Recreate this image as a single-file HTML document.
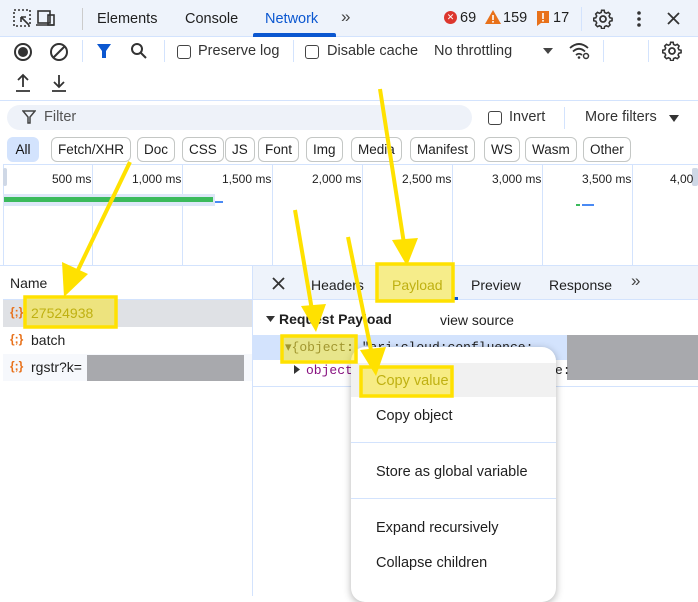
<!DOCTYPE html>
<html><head><meta charset="utf-8"><style>
*{margin:0;padding:0;box-sizing:border-box}
body{width:698px;height:596px;overflow:hidden;background:#fff;font-family:"Liberation Sans","DejaVu Sans",sans-serif;font-size:14px;color:#1f1f1f;position:relative}
.a{position:absolute;white-space:nowrap}
.chip{position:absolute;top:137px;height:25px;border:1px solid #c4c7c5;border-radius:6px;font-size:13.5px;line-height:23px;padding:0 6px;background:#fff}
.cb{position:absolute;width:14px;height:14px;border:1.5px solid #444;border-radius:3px}
.vl{position:absolute;width:1px;background:#d3e3fd}
.mono{font-family:"Liberation Mono",monospace;font-size:13px}
</style></head><body>
<svg width="0" height="0" style="position:absolute"><defs>
<g id="gear" fill="none" stroke="#333" stroke-width="1.8"><circle cx="10" cy="10" r="3"/><path d="M8.5 1.5h3l.5 2.5 2 1 2.3-1.2 2.1 2.1-1.2 2.3 1 2 2.5.5v3l-2.5.5-1 2 1.2 2.3-2.1 2.1-2.3-1.2-2 1-.5 2.5h-3l-.5-2.5-2-1-2.3 1.2-2.1-2.1 1.2-2.3-1-2-2.5-.5v-3l2.5-.5 1-2-1.2-2.3 2.1-2.1 2.3 1.2 2-1z" transform="scale(.86) translate(1.5 0)"/></g>
</defs></svg>
<!-- top bar -->
<div class="a" style="left:0;top:0;width:698px;height:37px;background:#eef3fb;border-bottom:1px solid #d3e3fd"></div>
<svg class="a" style="left:12px;top:8px" width="52" height="22" viewBox="0 0 52 22" fill="none" stroke="#333" stroke-width="1.6">
<rect x="2" y="2" width="16" height="16" stroke-dasharray="2 2"/><path d="M9 9 L17 17 M9 9 h5 M9 9 v5"/>
<rect x="26" y="3" width="12" height="12"/><path d="M24 17 h18"/><rect x="36" y="7" width="6" height="10"/></svg>
<div class="a" style="left:82px;top:8px;width:1px;height:22px;background:#ccc"></div>
<div class="a" style="left:97px;top:11px;font-size:14.5px">Elements</div>
<div class="a" style="left:185px;top:11px;font-size:14.5px">Console</div>
<div class="a" style="left:265px;top:11px;font-size:14.5px;color:#0b57d0">Network</div>
<div class="a" style="left:253px;top:33px;width:83px;height:4px;background:#0b57d0;border-radius:2px 2px 0 0"></div>
<div class="a" style="left:341px;top:7px;font-size:17px;color:#444">&raquo;</div>
<div class="a" style="left:444px;top:11px;width:13px;height:13px;border-radius:50%;background:#dc362e;color:#fff;font-size:9px;text-align:center;line-height:13px">✕</div>
<div class="a" style="left:460px;top:10px;font-size:14.5px">69</div>
<svg class="a" style="left:485px;top:10px" width="16" height="14"><path d="M8 0 L16 14 H0 Z" fill="#e8711a"/><rect x="7.2" y="5" width="1.6" height="5" fill="#fff"/><rect x="7.2" y="11" width="1.6" height="1.6" fill="#fff"/></svg>
<div class="a" style="left:503px;top:10px;font-size:14.5px">159</div>
<svg class="a" style="left:537px;top:11px" width="12" height="15"><path d="M0 0 H12 V12 H4 L0 15 Z" fill="#e8711a"/><rect x="5.2" y="2" width="1.6" height="6" fill="#fff"/><rect x="5.2" y="9" width="1.6" height="1.6" fill="#fff"/></svg>
<div class="a" style="left:553px;top:10px;font-size:14.5px">17</div>
<div class="a" style="left:581px;top:7px;width:1px;height:24px;background:#d3e3fd"></div>
<svg class="a" style="left:593px;top:9px" width="20" height="20"><use href="#gear"/></svg>
<svg class="a" style="left:636px;top:10px" width="6" height="18"><circle cx="3" cy="3" r="1.8" fill="#333"/><circle cx="3" cy="9" r="1.8" fill="#333"/><circle cx="3" cy="15" r="1.8" fill="#333"/></svg>
<svg class="a" style="left:667px;top:12px" width="13" height="13" stroke="#333" stroke-width="1.8"><path d="M1 1 L12 12 M12 1 L1 12"/></svg>
<!-- toolbar -->
<div class="a" style="left:14px;top:43px;width:18px;height:18px;border:2px solid #333;border-radius:50%"></div>
<div class="a" style="left:18px;top:47px;width:10px;height:10px;background:#333;border-radius:50%"></div>
<svg class="a" style="left:49px;top:42px" width="20" height="20"><circle cx="10" cy="10" r="8" fill="none" stroke="#333" stroke-width="2"/><path d="M4 16 L16 4" stroke="#333" stroke-width="2"/></svg>
<div class="a" style="left:82px;top:40px;width:1px;height:22px;background:#d3e3fd"></div>
<svg class="a" style="left:96px;top:43px" width="16" height="16"><path d="M1 1 H15 L10 8 V15 H6 V8 Z" fill="#0b57d0"/></svg>
<svg class="a" style="left:130px;top:42px" width="18" height="18" fill="none" stroke="#333" stroke-width="2"><circle cx="7" cy="7" r="5"/><path d="M11 11 L16 16"/></svg>
<div class="a" style="left:164px;top:40px;width:1px;height:22px;background:#d3e3fd"></div>
<div class="cb" style="left:177px;top:45px"></div><div class="a" style="left:198px;top:43px;font-size:14.5px;color:#333">Preserve log</div>
<div class="a" style="left:293px;top:40px;width:1px;height:22px;background:#d3e3fd"></div>
<div class="cb" style="left:305px;top:45px"></div><div class="a" style="left:327px;top:43px;font-size:14.5px;color:#333">Disable cache</div>
<div class="a" style="left:434px;top:43px;font-size:14.5px;color:#333">No throttling</div>
<svg class="a" style="left:543px;top:48px" width="10" height="6"><path d="M0 0 H10 L5 6 Z" fill="#444"/></svg>
<svg class="a" style="left:569px;top:42px" width="22" height="18" fill="none" stroke="#333" stroke-width="1.8"><path d="M1 6 Q10 -2 19 6 M4 9.5 Q10 4 16 9.5 M7 13 Q10 10.5 13 13"/><circle cx="10" cy="15.5" r="1.3" fill="#333" stroke="none"/><circle cx="17" cy="14" r="2.5" stroke-width="1.5"/></svg>
<div class="a" style="left:603px;top:40px;width:1px;height:22px;background:#d3e3fd"></div>
<div class="a" style="left:648px;top:40px;width:1px;height:22px;background:#d3e3fd"></div>
<svg class="a" style="left:662px;top:41px" width="20" height="20"><use href="#gear"/></svg>
<svg class="a" style="left:14px;top:73px" width="60" height="20" fill="none" stroke="#333" stroke-width="1.8"><path d="M9 14 V2 M4 7 L9 2 L14 7 M2 18 H16"/><path d="M45 2 V14 M40 9 L45 14 L50 9 M38 18 H52"/></svg>
<div class="a" style="left:0;top:100px;width:698px;height:1px;background:#d3e3fd"></div>
<!-- filter -->
<div class="a" style="left:7px;top:105px;width:465px;height:25px;background:#eef2f9;border-radius:13px"></div>
<svg class="a" style="left:22px;top:110px" width="14" height="14" fill="none" stroke="#444" stroke-width="1.5"><path d="M1 1 H13 L8 7 V13 H6 V7 Z"/></svg>
<div class="a" style="left:44px;top:109px;font-size:14.5px;color:#555">Filter</div>
<div class="cb" style="left:488px;top:111px"></div><div class="a" style="left:509px;top:109px;font-size:14.5px;color:#333">Invert</div>
<div class="a" style="left:564px;top:107px;width:1px;height:22px;background:#d3e3fd"></div>
<div class="a" style="left:585px;top:109px;font-size:14.5px;color:#333">More filters</div>
<svg class="a" style="left:669px;top:115px" width="10" height="7"><path d="M0 0 H10 L5 7 Z" fill="#333"/></svg>
<div class="a" style="left:7px;top:137px;width:32px;height:25px;background:#d3e3fd;border-radius:6px;font-size:13.5px;line-height:25px;text-align:center;color:#111">All</div>
<div class="chip" style="left:51px">Fetch/XHR</div>
<div class="chip" style="left:137px">Doc</div>
<div class="chip" style="left:182px">CSS</div>
<div class="chip" style="left:225px">JS</div>
<div class="chip" style="left:258px">Font</div>
<div class="chip" style="left:306px">Img</div>
<div class="chip" style="left:351px">Media</div>
<div class="chip" style="left:410px">Manifest</div>
<div class="chip" style="left:484px">WS</div>
<div class="chip" style="left:525px">Wasm</div>
<div class="chip" style="left:583px">Other</div>
<!-- timeline -->
<div class="a" style="left:3px;top:164px;width:695px;height:1px;background:#d3e3fd"></div>
<div class="vl" style="left:92px;top:165px;height:100px"></div>
<div class="vl" style="left:182px;top:165px;height:100px"></div>
<div class="vl" style="left:272px;top:165px;height:100px"></div>
<div class="vl" style="left:362px;top:165px;height:100px"></div>
<div class="vl" style="left:452px;top:165px;height:100px"></div>
<div class="vl" style="left:542px;top:165px;height:100px"></div>
<div class="vl" style="left:632px;top:165px;height:100px"></div>
<div class="a" style="left:3px;top:164px;width:1px;height:101px;background:#d3e3fd"></div>
<div class="a" style="left:3px;top:168px;width:4px;height:18px;background:#cfd8e6;border-radius:2px"></div>
<div class="a" style="left:692px;top:168px;width:6px;height:18px;background:#cfd8e6;border-radius:2px"></div>
<div class="a" style="left:52px;top:172px;font-size:12px">500 ms</div>
<div class="a" style="left:132px;top:172px;font-size:12px">1,000 ms</div>
<div class="a" style="left:222px;top:172px;font-size:12px">1,500 ms</div>
<div class="a" style="left:312px;top:172px;font-size:12px">2,000 ms</div>
<div class="a" style="left:402px;top:172px;font-size:12px">2,500 ms</div>
<div class="a" style="left:492px;top:172px;font-size:12px">3,000 ms</div>
<div class="a" style="left:582px;top:172px;font-size:12px">3,500 ms</div>
<div class="a" style="left:670px;top:172px;font-size:12px">4,00</div>
<div class="a" style="left:3px;top:194px;width:212px;height:12px;background:#dde7f8"></div>
<div class="a" style="left:4px;top:197px;width:209px;height:5px;background:#3bba5c"></div>
<div class="a" style="left:215px;top:201px;width:8px;height:2px;background:#4a8af4"></div>
<div class="a" style="left:576px;top:204px;width:4px;height:2px;background:#3bba5c"></div>
<div class="a" style="left:582px;top:204px;width:12px;height:2px;background:#4a8af4"></div>
<div class="a" style="left:0;top:265px;width:698px;height:1px;background:#d3e3fd"></div>
<!-- left panel -->
<div class="a" style="left:10px;top:275px;font-size:14px">Name</div>
<div class="a" style="left:3px;top:299px;width:249px;height:1px;background:#d3e3fd"></div>
<div class="a" style="left:3px;top:300px;width:249px;height:27px;background:#dfe1e5"></div>
<div class="a" style="left:3px;top:354px;width:249px;height:27px;background:#f6f8fc"></div>
<div class="a" style="left:10px;top:305px;color:#e8711a;font-size:12px;font-weight:bold">{;}</div>
<div class="a" style="left:31px;top:305px;font-size:14px;color:#8a8420">27524938</div>
<div class="a" style="left:10px;top:332px;color:#e8711a;font-size:12px;font-weight:bold">{;}</div>
<div class="a" style="left:31px;top:332px;font-size:14px">batch</div>
<div class="a" style="left:10px;top:359px;color:#e8711a;font-size:12px;font-weight:bold">{;}</div>
<div class="a" style="left:31px;top:359px;font-size:14px">rgstr?k=</div>
<div class="a" style="left:87px;top:355px;width:157px;height:26px;background:#a8a9ad"></div>
<div class="a" style="left:252px;top:265px;width:1px;height:331px;background:#d3e3fd"></div>
<!-- right panel -->
<div class="a" style="left:253px;top:266px;width:445px;height:34px;background:#eef3fb;border-bottom:1px solid #d3e3fd"></div>
<svg class="a" style="left:272px;top:277px" width="13" height="13" stroke="#333" stroke-width="1.8"><path d="M1 1 L12 12 M12 1 L1 12"/></svg>
<div class="a" style="left:311px;top:277px;font-size:14px">Headers</div>
<div class="a" style="left:392px;top:277px;font-size:14px;color:#8a8420">Payload</div>
<div class="a" style="left:454px;top:297px;width:4px;height:3px;background:#0b57d0"></div>
<div class="a" style="left:471px;top:277px;font-size:14px">Preview</div>
<div class="a" style="left:549px;top:277px;font-size:14px">Response</div>
<div class="a" style="left:631px;top:271px;font-size:17px;color:#444">&raquo;</div>
<svg class="a" style="left:266px;top:316px" width="9" height="6"><path d="M0 0 H9 L4.5 6 Z" fill="#333"/></svg>
<div class="a" style="left:279px;top:311px;font-size:14px;font-weight:bold">Request Payload</div>
<div class="a" style="left:440px;top:312px;font-size:14px">view source</div>
<div class="a" style="left:253px;top:335px;width:445px;height:25px;background:#d3e3fd"></div>
<div class="a mono" style="left:285px;top:340px;color:#555">▾{object<span style="color:#1f1f1f">: "ari:cloud:confluence:</span></div>
<div class="a" style="left:567px;top:335px;width:131px;height:45px;background:#a8a9ad"></div>
<svg class="a" style="left:294px;top:365px" width="6" height="9"><path d="M0 0 V9 L6 4.5 Z" fill="#333"/></svg>
<div class="a mono" style="left:306px;top:363px;color:#881280">object</div>
<div class="a mono" style="left:555px;top:363px">e:</div>
<div class="a" style="left:253px;top:386px;width:445px;height:1px;background:#d3e3fd"></div>
<!-- context menu -->
<div class="a" style="left:351px;top:347px;width:205px;height:255px;background:#fff;border-radius:14px;box-shadow:0 2px 8px rgba(0,0,0,.3)"></div>
<div class="a" style="left:351px;top:363px;width:205px;height:34px;background:#f1f1f1"></div>
<div class="a" style="left:376px;top:373px;font-size:14.5px;color:#8a8420">Copy value</div>
<div class="a" style="left:376px;top:408px;font-size:14.5px">Copy object</div>
<div class="a" style="left:351px;top:442px;width:205px;height:1px;background:#d3e3fd"></div>
<div class="a" style="left:376px;top:464px;font-size:14.5px">Store as global variable</div>
<div class="a" style="left:351px;top:498px;width:205px;height:1px;background:#d3e3fd"></div>
<div class="a" style="left:376px;top:520px;font-size:14.5px">Expand recursively</div>
<div class="a" style="left:376px;top:555px;font-size:14.5px">Collapse children</div>
<!-- annotations -->
<svg class="a" style="left:0;top:0" width="698" height="596">
<g fill="rgba(255,230,0,0.45)" stroke="#ffe100" stroke-width="3.5">
<rect x="25" y="297" width="91" height="30"/>
<rect x="377" y="264" width="76" height="37"/>
<rect x="282" y="336" width="74" height="26"/>
<rect x="361" y="367" width="91" height="29"/>
</g>
<g stroke="#ffe100" stroke-width="4" fill="none">
<path d="M130 162 L78 270"/><path d="M380 89 L405 250"/><path d="M295 210 L313 316"/><path d="M348 237 L372 355"/>
</g>
<g fill="#ffe100">
<path d="M64 297 L62 262 L88 274 Z"/><path d="M407 266 L392 240 L418 238 Z"/>
<path d="M316 332 L301 306 L326 304 Z"/><path d="M376 376 L360 350 L386 347 Z"/>
</g>
</svg>
</body></html>
